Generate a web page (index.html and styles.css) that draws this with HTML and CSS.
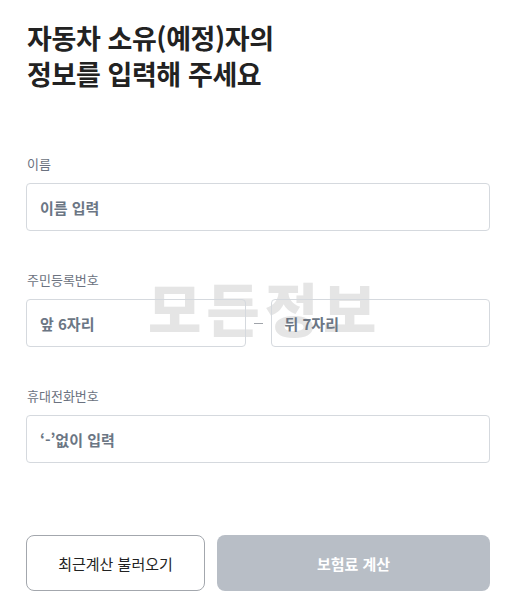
FILE: index.html
```html
<!DOCTYPE html>
<html lang="ko">
<head>
<meta charset="utf-8">
<link rel="stylesheet" href="styles.css">
</head>
<body>
<div class="page">
  <h1 class="title">자동차 소유(예정)자의<br>정보를 입력해 주세요</h1>
  <div class="form">
    <div class="field">
      <label class="label">이름</label>
      <div class="input"><span class="ph">이름 입력</span></div>
    </div>
    <div class="field">
      <label class="label">주민등록번호</label>
      <div class="split">
        <div class="input"><span class="ph">앞 6자리</span></div>
        <span class="dash"></span>
        <div class="input"><span class="ph">뒤 7자리</span></div>
      </div>
      <div class="watermark">모든정보</div>
    </div>
    <div class="field">
      <label class="label">휴대전화번호</label>
      <div class="input"><span class="ph">‘-’없이 입력</span></div>
    </div>
  </div>
  <div class="actions">
    <button class="btn btn-outline">최근계산 불러오기</button>
    <button class="btn btn-primary">보험료 계산</button>
  </div>
</div>
</body>
</html>
```
FILE: styles.css
```css
* { box-sizing: border-box; }
html, body { margin: 0; padding: 0; background: #fff; }
body {
  font-family: "Noto Sans CJK KR", "Noto Sans", sans-serif;
  color: #222;
}
.page {
  padding: 20px 36px 0 26px;
}
.title {
  margin: 0 0 0 1px;
  font-size: 27px;
  line-height: 36px;
  font-weight: 700;
  color: #222;
  letter-spacing: -0.4px;
}
.form {
  margin-top: 63px;
  display: flex;
  flex-direction: column;
  gap: 40px;
}
.field {
  position: relative;
  display: flex;
  flex-direction: column;
  gap: 10px;
}
.label {
  font-size: 13px;
  line-height: 18px;
  color: #6b7280;
  padding-left: 1px;
}
.input {
  position: relative;
  z-index: 1;
  height: 48px;
  border: 1px solid #d5d9de;
  border-radius: 4px;
  display: flex;
  align-items: center;
  padding-left: 13px;
  background: transparent;
}
.ph {
  font-size: 15px;
  font-weight: 700;
  color: #6b7684;
}
.split {
  display: grid;
  grid-template-columns: 1fr 9px 1fr;
  column-gap: 8px;
  align-items: center;
}
.dash {
  height: 1px;
  background: #a0a4aa;
  position: relative;
  z-index: 1;
}
.watermark {
  position: absolute;
  left: 122px;
  top: 4px;
  font-size: 58px;
  line-height: 64px;
  font-weight: 900;
  color: #e5e5e5;
  letter-spacing: 5px;
  z-index: 0;
  pointer-events: none;
}
.actions {
  margin-top: 72px;
  display: grid;
  grid-template-columns: 179px 1fr;
  gap: 12px;
}
.btn {
  height: 56px;
  border-radius: 8px;
  font-family: inherit;
  font-size: 15px;
}
.btn-outline {
  background: #fff;
  border: 1px solid #a3a7ad;
  color: #222;
  font-weight: 400;
}
.btn-primary {
  background: #b8bec6;
  border: none;
  color: #fff;
  font-weight: 700;
}
```
